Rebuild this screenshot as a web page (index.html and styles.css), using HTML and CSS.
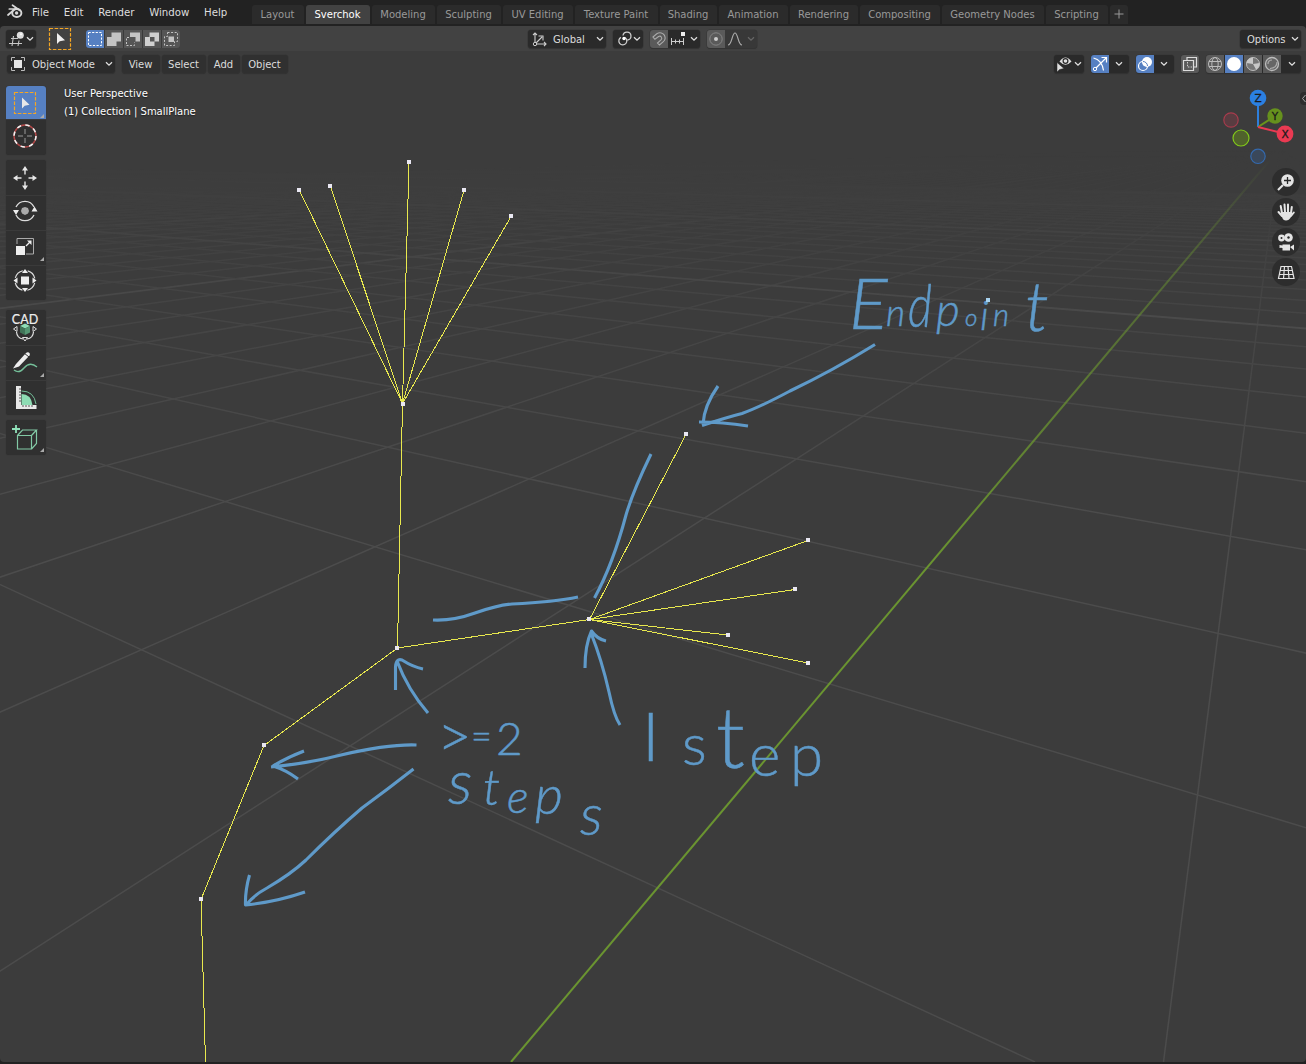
FILE: index.html
```html
<!DOCTYPE html>
<html lang="en">
<head>
<meta charset="utf-8">
<title>Blender</title>
<link rel="stylesheet" href="styles.css">
</head>
<body>
<svg width="0" height="0" class="defs">
  <symbol id="chev" viewBox="0 0 8 6"><path d="M1 1.2 4 4.2 7 1.2" fill="none" stroke="currentColor" stroke-width="1.3"/></symbol>
</svg>
<div class="app">
  <header class="topbar">
    <svg class="logo" viewBox="0 0 16 15"><path d="M1 11 8 5H2.300M5.500 1.200l7.500 5.300" fill="none" stroke="#d8d8d8" stroke-width="1.700" stroke-linecap="round"/><ellipse cx="9.800" cy="9" rx="4.600" ry="4" fill="none" stroke="#d8d8d8" stroke-width="1.900"/><circle cx="9.600" cy="9" r="1.700" fill="#d8d8d8"/></svg>
    <nav class="menus"><span>File</span><span>Edit</span><span>Render</span><span>Window</span><span>Help</span></nav>
    <nav class="tabs"><span>Layout</span><span class="on">Sverchok</span><span>Modeling</span><span>Sculpting</span><span>UV Editing</span><span>Texture Paint</span><span>Shading</span><span>Animation</span><span>Rendering</span><span>Compositing</span><span>Geometry Nodes</span><span>Scripting</span><span class="plus"><svg viewBox="0 0 10 10"><path d="M5 .5v9M.5 5h9" stroke="#999"/></svg></span></nav>
  </header>

  <div class="settings">
    <div class="left">
      <div class="btn editor"><svg width="16" height="16" viewBox="0 0 16 16"><path d="M2 7.5h7M0 12.5h13M4.5 5 3 15M10 9.500 9 15" fill="none" stroke="#c8c8c8" stroke-width="1.1"/><circle cx="11.300" cy="4.300" r="3.500" fill="#dedede"/><circle cx="12" cy="3.200" r="1" fill="#fff"/></svg><svg class="chev"><use href="#chev"/></svg></div>
      <svg class="tool" viewBox="0 0 24 24"><rect x="1.500" y="1.500" width="21" height="21" fill="none" stroke="#f5a623" stroke-width="1.200" stroke-dasharray="3.600 1.500"/><path d="M9 6v11l2.700-2.700 5.300-1z" fill="#f0f0f0"/></svg>
      <div class="modes">
        <span class="on"><svg viewBox="0 0 18 18"><rect x="2.500" y="2.500" width="13" height="13" fill="none" stroke="#fff" stroke-dasharray="2.200 1.400"/></svg></span>
        <span><svg viewBox="0 0 18 18"><path d="M6.500 2.500H16v9h-4.500V16H2V7h4.500z" fill="#c4c4c4"/></svg></span>
        <span><svg viewBox="0 0 18 18"><path d="M6 2.500h10v9h-4.500V7H6z" fill="#c4c4c4"/><path d="M5 7.500H2.500v8h8v-3" fill="none" stroke="#c4c4c4" stroke-dasharray="2 1.500"/></svg></span>
        <span><svg viewBox="0 0 18 18"><path d="M6.500 2.500H16v9h-4.500V16H2V7h4.500zM7 7v4.500h4.500V7z" fill="#d0d0d0" fill-rule="evenodd"/></svg></span>
        <span><svg viewBox="0 0 18 18"><rect x="6.500" y="6.500" width="5.500" height="5.500" fill="#c4c4c4"/><path d="M5.500 2.500h10v9h-3v4h-10v-9h3z" fill="none" stroke="#c4c4c4" stroke-dasharray="2 1.600"/></svg></span>
      </div>
    </div>
    <div class="middle">
      <div class="btn orient"><svg width="15" height="15" viewBox="0 0 15 15"><path d="M3 1v11h11M1 3l2-2 2 2M12 10l2 2-2 2M4 11l6-6M6.500 4H11v4.500" fill="none" stroke="#ccc" stroke-width="1.100"/><circle cx="3" cy="12" r="1.700" fill="#282828" stroke="#ccc"/></svg><span>Global</span><svg class="chev"><use href="#chev"/></svg></div>
      <div class="btn pivot"><svg width="16" height="16" viewBox="0 0 16 16"><path d="M7 4.500A4 4 0 1 1 11.500 9M9 6.500A4 4 0 1 1 5 6.300" fill="none" stroke="#ccc" stroke-width="1.300"/><circle cx="8" cy="7.500" r="1.700" fill="#fff"/></svg><svg class="chev"><use href="#chev"/></svg></div>
      <div class="btn snap"><span class="half"><svg width="16" height="16" viewBox="0 0 16 16"><path d="m2 6 3.800-3.200c3-2 6.300-.8 7.700 1.600 1.200 2.500.5 4.700-1.200 6.300L8.500 14l-2-2 3.700-3.300c1.500-1.700-.4-4.400-2.600-3.200L3.900 8.300z" fill="none" stroke="#aaa" stroke-width="1.100"/></svg></span><svg width="16" height="16" viewBox="0 0 16 16"><path d="M1 10.500h13M1.500 7v7M5.500 8.500v4M9.500 8.500v4M13.500 7v7" stroke="#ccc"/><rect x="11" y="1" width="4" height="4" fill="#eee"/></svg><svg class="chev"><use href="#chev"/></svg></div>
      <div class="btn prop"><span class="half"><svg width="16" height="16" viewBox="0 0 16 16"><circle cx="8" cy="8" r="6.200" fill="none" stroke="#858585"/><circle cx="8" cy="8" r="2" fill="#ccc"/></svg></span><svg width="16" height="16" viewBox="0 0 16 16"><path d="M1 14C5 14 5 2 8 2s3 12 7 12" fill="none" stroke="#aaa" stroke-width="1.200"/></svg><svg class="chev dim"><use href="#chev"/></svg></div>
    </div>
    <div class="btn options"><span>Options</span><svg class="chev"><use href="#chev"/></svg></div>
  </div>

  <main class="viewport">
    <svg class="scene" viewBox="0 51 1306 1011">
      <defs>
        <linearGradient id="far" gradientUnits="userSpaceOnUse" x1="0" y1="150" x2="0" y2="520"><stop offset="0" stop-color="#000"/><stop offset=".1" stop-color="#1c1c1c"/><stop offset=".4" stop-color="#888"/><stop offset="1" stop-color="#fff"/></linearGradient>
        <mask id="fade" maskUnits="userSpaceOnUse" x="0" y="51" width="1306" height="1011"><rect x="0" y="51" width="1306" height="1011" fill="url(#far)"/></mask>
        <linearGradient id="axis" gradientUnits="userSpaceOnUse" x1="0" y1="158" x2="0" y2="560"><stop offset="0" stop-color="#6a9430" stop-opacity="0"/><stop offset=".25" stop-color="#6a9430" stop-opacity=".45"/><stop offset="1" stop-color="#6a9430"/></linearGradient>
      </defs>
      <g id="floor" class="floor" mask="url(#fade)"></g>
      <path d="M511 1062 1270 160" stroke="url(#axis)" stroke-width="2"/>
      <path class="wire" d="M299.500 190.500 402.500 403.500 330.500 186.500M409 162 402.500 403.500 464 190.500M511 216.500 402.500 403.500 397.500 648 589.500 619.500 686 434.500M808 540.500 589.500 619.500 795 589.500M728 635 589.500 619.500 808 663M397.500 648 264 745.500 201 899.500 205.500 1062"/>
      <path class="verts" d="M297 188h4v4h-4zM328 184h4v4h-4zM407 160h4v4h-4zM462 188h4v4h-4zM509 214h4v4h-4zM401 402h4v4h-4zM395 646h4v4h-4zM587 617h4v4h-4zM684 432h4v4h-4zM806 538h4v4h-4zM793 587h4v4h-4zM726 633h4v4h-4zM806 661h4v4h-4zM262 743h4v4h-4zM199 897h4v4h-4z"/>
      <g class="ink">
        <path d="M875 344.500Q832 371 790 391Q760 407 742 413.500Q728 417 702 425.500M718 386Q704 406 703 424M699 422Q722 422 748 426"/>
        <path d="M651 454Q633 491 626 515Q613 564 594.500 598M433 620Q453 621 475 613Q498 605 512 604Q555 602 578 597"/>
        <path d="M620 725Q614 716 609 692Q602 661 591 633M585 668Q585 645 591.500 631Q597 639 606 641"/>
        <path d="M428 713Q408 690 397 661M395.500 690V667Q396 658 402 660Q413 667 423 669"/>
        <path d="M416.500 745Q388 744 341 755Q310 763 271 767M304 751Q286 758 273 766Q286 770 298 779"/>
        <path d="M413.500 769Q388 789 362 808Q334 832 306 860Q291 874 267 888Q254 895 246 905M249.500 875Q245 891 245.500 905Q276 902 305 892"/>
      </g>
      <g class="hand">
        <text><tspan x="849" y="329" font-size="72">E</tspan><tspan x="886" y="326" font-size="37">n</tspan><tspan x="908" y="327" font-size="60" textLength="24" lengthAdjust="spacingAndGlyphs">d</tspan><tspan x="936" y="326" font-size="46">p</tspan><tspan x="965" y="326" font-size="24">o</tspan><tspan x="980" y="330" font-size="41">i</tspan><tspan x="993" y="326" font-size="31">n</tspan><tspan x="1025" y="331" font-size="70">t</tspan></text>
        <text class="up"><tspan x="437" y="757" font-size="60">&gt;</tspan><tspan x="471" y="749" font-size="36">=</tspan><tspan x="496" y="755" font-size="46">2</tspan></text>
        <text class="slant"><tspan x="448" y="804" font-size="62">s</tspan><tspan x="483" y="805" font-size="50">t</tspan><tspan x="507" y="813" font-size="46">e</tspan><tspan x="535" y="814" font-size="54">p</tspan><tspan x="580" y="835" font-size="58">s</tspan></text>
        <text class="up"><tspan x="642" y="761" font-size="67">I</tspan> <tspan x="682" y="765" font-size="58">s</tspan><tspan x="716" y="768" font-size="84">t</tspan><tspan x="749" y="776" font-size="60">e</tspan><tspan x="790" y="776" font-size="60">p</tspan></text>
      </g>
      <rect x="986" y="298" width="4" height="4" fill="#a9d3f0"/>
      <g class="gizmo">
        <path d="M1258 127V98" stroke="#2d7fdc"/><path d="m1258 127 17-11" stroke="#6a951b"/><path d="m1258 127 27 6.700" stroke="#ea3a52"/>
        <circle cx="1231" cy="120" r="7.200" fill="#593c41" stroke="#a63b4c"/><circle cx="1241" cy="138" r="8" fill="#50622c" stroke="#82c91a"/><circle cx="1258" cy="156.300" r="7.200" fill="#3a485b" stroke="#3469ad"/>
        <circle class="ball" cx="1258" cy="98" r="8.300" fill="#2b80e2"/><circle class="ball" cx="1275" cy="116" r="7.700" fill="#66911d"/><circle class="ball" cx="1285" cy="134" r="8.400" fill="#ea3a52"/>
        <text x="1258" y="102">Z</text><text x="1275" y="120">Y</text><text x="1285" y="138">X</text>
      </g>
    </svg>

    <div class="header">
      <div class="left">
        <div class="btn mode"><svg width="16" height="16" viewBox="0 0 16 16"><path d="M1.500 5V1.500H5M11 1.500h3.500V5M14.500 11v3.500H11M5 14.500H1.500V11" fill="none" stroke="#bbb"/><rect x="4" y="4" width="8" height="8" fill="#e6e6e6"/></svg><span>Object Mode</span><svg class="chev"><use href="#chev"/></svg></div>
        <span class="btn m1">View</span><span class="btn m2">Select</span><span class="btn m3">Add</span><span class="btn m4">Object</span>
      </div>
      <div class="right">
        <div class="btn vis"><svg width="16" height="16" viewBox="0 0 16 16"><path d="M3.500 5.500Q9.500-2.500 15.500 5.500 9.500 12 3.500 5.500z" fill="#e0e0e0"/><circle cx="9.500" cy="5" r="2.400" fill="#e0e0e0" stroke="#282828" stroke-width="1.200"/><path d="M1 6.500v9.500l2.600-2.500 4.400-1z" fill="#e0e0e0" stroke="#282828" stroke-width=".5"/></svg><svg class="chev"><use href="#chev"/></svg></div>
        <div class="btn pair"><span class="blue"><svg viewBox="0 0 18 18"><path d="M2.500 3Q11 5 12.500 15.500M5 13 15 3M10.500 2.500H15.500V7.500" fill="none" stroke="#fff" stroke-width="1.200"/><circle cx="4" cy="14" r="1.700" fill="none" stroke="#fff"/></svg></span><svg class="chev"><use href="#chev"/></svg></div>
        <div class="btn pair"><span class="blue"><svg viewBox="0 0 18 18"><circle cx="11" cy="7" r="5" fill="#fff"/><circle cx="7" cy="11" r="4.500" fill="none" stroke="#fff" stroke-width="1.200"/><path d="M7 6.500A4.500 4.500 0 0 1 11.500 11" fill="none" stroke="#5680c2"/></svg></span><svg class="chev"><use href="#chev"/></svg></div>
        <div class="btn xray"><svg viewBox="0 0 18 18"><path d="M6 5V2.500h9.500V12H13M2.500 5.500h10v10h-10z" fill="none" stroke="#ddd" stroke-width="1.200"/><path d="M6.500 7v5H11" fill="none" stroke="#ccc" stroke-dasharray="1.500 1.200"/></svg></div>
        <div class="btn shade">
          <span><svg viewBox="0 0 18 18"><g fill="none" stroke="#bbb"><circle cx="9" cy="9" r="6.500"/><ellipse cx="9" cy="9" rx="3.200" ry="6.500"/><path d="M3 6.500h12M3 11.500h12"/></g></svg></span>
          <span class="blue"><svg viewBox="0 0 18 18"><circle cx="9" cy="9" r="7" fill="#fff"/></svg></span>
          <span><svg viewBox="0 0 18 18"><circle cx="9" cy="9" r="6.500" fill="#777" stroke="#bbb"/><path d="M9 9V2.500A6.500 6.500 0 0 0 2.500 8zM9 9l6.500-1A6.500 6.500 0 0 1 12 14.500z" fill="#c8c8c8"/></svg></span>
          <span><svg viewBox="0 0 18 18"><circle cx="9" cy="9" r="6.500" fill="#666" stroke="#bbb" stroke-width="1.300"/><path d="M5 9Q5 5 9 5M14 7Q14 13 7 13.500" fill="none" stroke="#aaa" stroke-width="1.200"/></svg></span>
          <svg class="chev"><use href="#chev"/></svg>
        </div>
      </div>
    </div>

    <div class="body">
      <div class="tools">
        <div class="group g1">
          <div class="on"><svg viewBox="0 0 40 34"><rect x="8.500" y="6.500" width="21" height="21" fill="none" stroke="#f5a623" stroke-width="1.200" stroke-dasharray="3.600 1.500"/><path d="M16 11.500v11l2.700-2.700 4.800-1z" fill="#e8e8e8"/><path class="more" d="M38 28v4h-4z"/></svg></div>
          <div><svg viewBox="0 0 40 35"><circle cx="19" cy="18" r="11" fill="none" stroke="#b04848" stroke-width="1.400"/><circle cx="19" cy="18" r="11" fill="none" stroke="#f2f2f2" stroke-width="1.600" stroke-dasharray="4.320 4.320"/><path d="M19 11v5M19 20v5M12 18h5M21 18h5" stroke="#999"/></svg></div>
        </div>
        <div class="group g2">
          <div><svg viewBox="0 0 40 35"><path d="m19 6 3 4.500h-6zM19 30l3-4.500h-6zM7 18l4.500-3v6zM31 18l-4.500-3v6z" fill="#e8e8e8"/><path d="M19 10v4.500M19 21.500V26M11 18h4.500M22.500 18H27" stroke="#e8e8e8" stroke-width="1.400"/></svg></div>
          <div><svg viewBox="0 0 40 35"><path d="M10 14A10 10 0 0 1 28 14M10 22A10 10 0 0 0 28 22" fill="none" stroke="#ddd" stroke-width="1.300"/><path d="m7 17h6l-3 5zM25.500 18.500h6l-3-5z" fill="#eee"/><path d="m19 14 3 1 1 3-1 2.500-3 1.500-3-1.500-1-2.500 1-3z" fill="#aaa"/></svg></div>
          <div><svg viewBox="0 0 40 35"><path d="M11 16V10.500H27.500V26H20" fill="none" stroke="#aaa"/><rect x="10" y="18" width="9" height="9" fill="#eee"/><path d="m20 18 4-4" stroke="#eee" stroke-width="1.300"/><path d="M21 12.500h4.500V17z" fill="#eee"/><path class="more" d="M38 29v4h-4z"/></svg></div>
          <div><svg viewBox="0 0 40 35"><circle cx="19" cy="17.500" r="10" fill="none" stroke="#ddd" stroke-width="1.200" stroke-dasharray="10.700 5" stroke-dashoffset="-2.500"/><rect x="15" y="13.500" width="8" height="8" fill="#eee"/><path d="m19 6 3 4h-6zM19 29l3-4h-6zM7.500 17.500l4-3v6zM30.500 17.500l-4-3v6z" fill="#eee"/></svg></div>
        </div>
        <div class="group g3">
          <div><svg viewBox="0 0 40 35"><text class="cad" x="19" y="14">CAD</text><path d="M10.500 22Q11 28 17 29M27.500 22Q27 28 21 29" fill="none" stroke="#ddd" stroke-width="1.200"/><path d="m11 16.500v5l-3.500-2.500zM27 16.500v5l3.500-2.500zM16.500 27.500h5L19 31z" fill="none" stroke="#ddd"/><path d="m19 13.500 5 2.500-5 2.500-5-2.500z" fill="#8edcb4"/><path d="M14 16l5 2.500V25l-5-2.500z" fill="#407458"/><path d="m24 16-5 2.500V25l5-2.500z" fill="#559673"/></svg></div>
          <div><svg viewBox="0 0 40 35"><path d="M8 26Q13 30 18 24 24 17 31 23" fill="none" stroke="#74bf99" stroke-width="1.300"/><path d="m10 20 10-11c2-2 5 0 3.500 2.500L13 22.500 7 24.500z" fill="#eee"/><path d="m18 9 5 4" stroke="#333"/><path class="more" d="M38 29v4h-4z"/></svg></div>
          <div><svg viewBox="0 0 40 35"><path d="M15.500 26V15Q25 15 26.500 26z" fill="#8edcb4"/><path d="M15.500 12Q28 12 30 25" fill="none" stroke="#74bf99"/><path d="M10 7h5v19h15.500v4H10z" fill="#e8e8e8"/><path d="M13 10h2M13 13h2M13 16h2M13 19h2M13 22h2M17 26v2M20 26v2M23 26v2M26 26v2" stroke="#333" stroke-width=".8"/></svg></div>
        </div>
        <div class="group g4">
          <div><svg viewBox="0 0 40 35"><path d="M11.500 15.500h14v13.500h-14zM11.500 15.500l5-5.500h14l-5 5.500M30.500 10v13.500l-5 5.500" fill="none" stroke="#82c9a5" stroke-width="1.200"/><path d="M10 5v8M6 9h8" stroke="#90e2ba" stroke-width="1.800"/><path class="more" d="M38 28v4h-4z"/></svg></div>
        </div>
      </div>
      <div class="info"><p>User Perspective</p><p>(1) Collection | SmallPlane</p></div>
      <div class="nav">
        <div><svg viewBox="0 0 28 28"><circle cx="15.500" cy="12.500" r="6.300" fill="#e4e4e4"/><path d="m11 17-5 5" stroke="#e4e4e4" stroke-width="2.200"/><path d="M15.500 9v7M12 12.500h7" stroke="#282828" stroke-width="1.300"/></svg></div>
        <div><svg viewBox="0 0 28 28"><path d="M10 15 8.700 8M13 14 12.500 6.500M16 14V6.500M19 15l.8-6M10 18l-3.500-4M19 18l2.800-3.500" stroke="#e4e4e4" stroke-width="2" stroke-linecap="round"/><path d="M9 14h11l-1 5q-2 3.500-5 3.500T10 19z" fill="#e4e4e4"/></svg></div>
        <div><svg viewBox="0 0 28 28"><circle cx="9.500" cy="10" r="3.400" fill="#e4e4e4"/><circle cx="16.500" cy="9.500" r="4.300" fill="#e4e4e4"/><circle cx="9.500" cy="10" r="1" fill="#292929"/><circle cx="16.500" cy="9.500" r="1.200" fill="#292929"/><path d="M10.500 16.500H18v6h-7.500zM7.500 17v3l3-.5v-2zM18 19l4-2.500v6z" fill="#e4e4e4"/></svg></div>
        <div><svg viewBox="0 0 28 28"><path d="M9 8.500h10.500L22 20.500H6.500zM8.200 12.500h12M7.400 16.500h13.800M12.500 8.500 11.500 20.500M16 8.500l1 12" fill="none" stroke="#e4e4e4" stroke-width="1.200"/></svg></div>
      </div>
      <div class="sidetab"><svg viewBox="0 0 6 13"><path d="M5.500 3 2.500 6.500l3 3.500" fill="none" stroke="#aaa"/></svg></div>
    </div>
  </main>
  <div class="foot"></div>
</div>
<script src="grid.js"></script>
</body>
</html>
```
FILE: styles.css
```css
* { box-sizing: border-box; }
body { margin: 0; background: #222; font: 10px/18px "DejaVu Sans", sans-serif; color: #dcdcdc; overflow: hidden; }
svg { display: block; flex: none; }
.defs { position: absolute; }
.app { width: 1306px; height: 1064px; display: flex; flex-direction: column; background: #222; }

.topbar { height: 26px; display: flex; align-items: flex-start; }
.logo { width: 16px; height: 15px; margin: 4px 0 0 7px; }
.menus { display: flex; gap: 14.7px; margin: 4px 0 0 9px; width: 220px; font-size: 10.2px; line-height: 17px; color: #dedede; }
.menus span { white-space: nowrap; }
.tabs { display: grid; grid-template-columns: 52px 64px 63px 64px 70px 83px 57px 69px 68px 80px 102px 62px 18px; gap: 2px; margin-top: 5px; }
.tabs span { height: 19px; line-height: 20px; background: #2b2b2b; border-radius: 3px 3px 0 0; text-align: center; color: #999; white-space: nowrap; padding-right: 1px; }
.tabs .on { background: #424242; color: #fff; }
.plus svg { width: 10px; height: 10px; margin: 4px auto 0; }

.settings { height: 25px; background: #424242; border-radius: 4px 4px 0 0; display: flex; padding: 4px 5px 0 6px; }
.settings .left { width: 522px; display: flex; }
.middle { display: flex; gap: 7px; flex: 1; }
.btn { height: 18px; line-height: 20px; background: #2a2a2a; border-radius: 3px; display: flex; align-items: center; white-space: nowrap; box-shadow: 0 0 0 .5px #363636, 0 1px 1px rgba(0,0,0,.25); overflow: hidden; }
.btn > span:not([class]) { padding-top: 1px; }
.chev { width: 8px; height: 6px; color: #ddd; margin-left: auto; margin-right: 2px; }
.dim { color: #666; }
.editor { width: 30px; padding-left: 3px; }
.tool { width: 24px; height: 24px; margin: -3px 0 0 12px; }
.modes { display: flex; gap: 1px; margin-left: 14px; width: 94px; height: 18px; border-radius: 3px; overflow: hidden; background: #3a3a3a; }
.modes span { width: 18px; height: 18px; background: #555; }
.modes .on, .blue { background: #5680c2 !important; }
.orient { width: 78px; padding-left: 4px; gap: 6px; }
.pivot { width: 30px; padding-left: 3px; }
.snap, .prop { width: 50px; }
.half { width: 18px; height: 18px; background: #5a5a5a; padding: 1px; margin-right: 2px; }
.prop { background: #383838; }
.options { width: 61px; padding-left: 7px; }

.viewport { flex: 1; min-height: 0; background: #3c3c3c; position: relative; border-radius: 0 0 4px 4px; overflow: hidden; }
.scene { position: absolute; inset: 0; width: 1306px; height: 1011px; }
.floor path { fill: none; stroke: #4c4c4c; stroke-width: 1.5; }
.floor .major { stroke: #555; stroke-width: 1.8; }
.wire { fill: none; stroke: #e8e84e; stroke-width: 1; shape-rendering: crispEdges; }
.verts { fill: #e9e7f2; }
.ink path { fill: none; stroke: #5f9ac9; stroke-width: 3.1; stroke-linejoin: round; }
.hand text { font-family: Lato, sans-serif; font-weight: 300; font-style: italic; fill: #5f9ac9; stroke: #5f9ac9; stroke-width: .5; }
.hand .up { font-style: normal; }
.gizmo path { stroke-width: 2; }
.gizmo circle { stroke-width: 1.2; }
.gizmo text { font-size: 10.5px; text-anchor: middle; fill: #1b1b1b; stroke: #1b1b1b; stroke-width: .3; }

.header { position: relative; height: 26px; padding: 4px 5px 0 7px; display: flex; justify-content: space-between; }
.header .left, .header .right { display: flex; }
.header .left .btn { justify-content: center; background: #303030; padding: 1px 1px 0 0; }
.header .left .mode { width: 108px; justify-content: flex-start; padding: 0 0 0 3px; gap: 6px; background: #2b2b2b; margin-right: 7px; }
.m1 { width: 38px; margin-right: 2px; }
.m2 { width: 44px; margin-right: 2px; }
.m3 { width: 32px; margin-right: 2px; }
.m4 { width: 46px; }
.header .right { gap: 7px; }
.right .vis { width: 30px; padding-left: 2px; }
.pair { width: 38px; }
.pair .blue, .shade span { width: 18px; height: 18px; padding: 0 !important; }
.pair .chev { margin: 0 auto; }
.header .right .xray { width: 18px; background: #5a5a5a; }
.shade { width: 95px; gap: 1px; }
.shade span { background: #5a5a5a; }
.shade .chev { margin: 0 auto; }

.body { position: relative; display: flex; height: 400px; }
.tools { width: 40px; margin: 9px 0 0 6px; display: flex; flex-direction: column; }
.group { background: #303030; border-radius: 3px; overflow: hidden; box-shadow: 0 0 1px #2c2c2c; }
.group div { height: 35px; }
.group div + div { border-top: 1px solid #3a3a3a; }
.group .on { height: 33px; background: #5680c2; }
.group svg { width: 40px; height: 35px; }
.group div + div svg { margin-top: -2px; }
.group .on svg { height: 34px; }
.g1 { height: 69px; margin-bottom: 5px; }
.g2 { height: 140px; margin-bottom: 10px; }
.g2 div + div svg { margin-top: -3px !important; }
.g3 { height: 105px; margin-bottom: 5px; }
.more { fill: #aaa; }
.cad { font: 12.5px Lato, sans-serif; text-anchor: middle; fill: #eee; stroke: #eee; stroke-width: .2; }
.info { margin: 8px 0 0 18px; color: #fff; text-shadow: 0 1px 1px #222; }
.info p { margin: 0; white-space: nowrap; }
.nav { margin: 91px 6px 0 auto; display: flex; flex-direction: column; gap: 2px; }
.nav div { width: 28px; height: 28px; border-radius: 50%; background: #2d2d2d; }
.sidetab { position: absolute; right: 0; top: 15px; width: 6px; height: 13px; background: #2d2d2d; border-radius: 4px 0 0 4px; }
.foot { height: 2px; }
```
FILE: grid.js
```javascript
// Floor grid: both line families run from a vanishing point on the horizon
// to evenly spaced points on the bottom edge of the viewport.
const floor = document.getElementById("floor");
const BASE = 1062, HORIZON = 148;

function addLine(vx, x, major) {
  const p = document.createElementNS("http://www.w3.org/2000/svg", "path");
  p.setAttribute("d", `M${vx} ${HORIZON}L${x} ${BASE}`);
  if (major) p.setAttribute("class", "major");
  floor.appendChild(p);
}

for (let k = -50; k <= 3; k++) {
  if (k !== 0) addLine(1280, 511 + 652.5 * k, k % 10 === 0);
}
for (let j = 0; j <= 40; j++) {
  addLine(-946, 1035 + 1047 * j, j % 10 === 9);
}
```
